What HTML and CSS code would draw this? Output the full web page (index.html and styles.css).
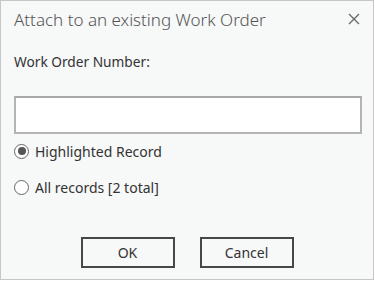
FILE: index.html
```html
<!DOCTYPE html>
<html>
<head>
    <meta name="viewport" content="width=device-width, initial-scale=1.0">
    <title>Attach to an existing Work Order</title>
    <link rel="stylesheet" href="styles.css">
</head>
<body>
<div class="dialog">
    <div class="header">
        <span class="title">Attach to an existing Work Order</span>
        <span class="close">
            <svg width="12" height="12" viewBox="0 0 12 12">
                <path d="M1 1 L11 11 M11 1 L1 11" stroke="#6a6a6a" stroke-width="1.4" fill="none"/>
            </svg>
        </span>
    </div>
    <form>
        <label class="field-label" for="wo">Work Order Number:</label>
        <input type="text" id="wo" class="field">
        <label class="option">
            <span class="radio checked"></span>
            Highlighted Record
        </label>
        <label class="option">
            <span class="radio"></span>
            All records [2 total]
        </label>
        <div class="actions">
            <button type="button" class="btn">OK</button>
            <button type="button" class="btn">Cancel</button>
        </div>
    </form>
</div>
</body>
</html>
```

FILE: styles.css
```css
* {
    margin: 0;
    padding: 0;
    box-sizing: border-box;
    font-family: 'Noto Sans', 'Open Sans', sans-serif;
}
body {
    background: #fff;
}
.dialog {
    width: 374px;
    height: 280px;
    background: #f7f8f8;
    border: 1px solid #c6c6c6;
}
.header {
    display: flex;
    align-items: center;
    justify-content: space-between;
    height: 36px;
    padding: 0 13px 0 13px;
}
.title {
    font-size: 17px;
    color: #555;
    font-weight: 300;
}
.close {
    display: flex;
}
form {
    padding: 0 13px;
}
.field-label {
    display: block;
    margin-top: 15px;
    font-size: 13.7px;
    color: #333;
    line-height: 20px;
}
.field {
    display: block;
    width: 348px;
    height: 38px;
    margin-top: 24px;
    border: 2px solid #b4b4b4;
    border-top-color: #a8a8a8;
    background: #fff;
    outline: 0;
}
.option {
    display: flex;
    align-items: center;
    gap: 6px;
    height: 20px;
    font-size: 14px;
    color: #333;
    margin-top: 7px;
}
.option + .option {
    margin-top: 16px;
}
.radio {
    width: 15px;
    height: 15px;
    border: 1px solid #666;
    border-radius: 50%;
    background: #fff;
    display: flex;
    align-items: center;
    justify-content: center;
}
.radio.checked::after {
    content: '';
    width: 8px;
    height: 8px;
    border-radius: 50%;
    background: #555;
}
.actions {
    display: flex;
    justify-content: center;
    gap: 25px;
    margin-top: 40px;
}
.btn {
    width: 94px;
    height: 31px;
    border: 2px solid #474747;
    background: #f7f8f8;
    font-size: 14px;
    color: #333;
}
```
